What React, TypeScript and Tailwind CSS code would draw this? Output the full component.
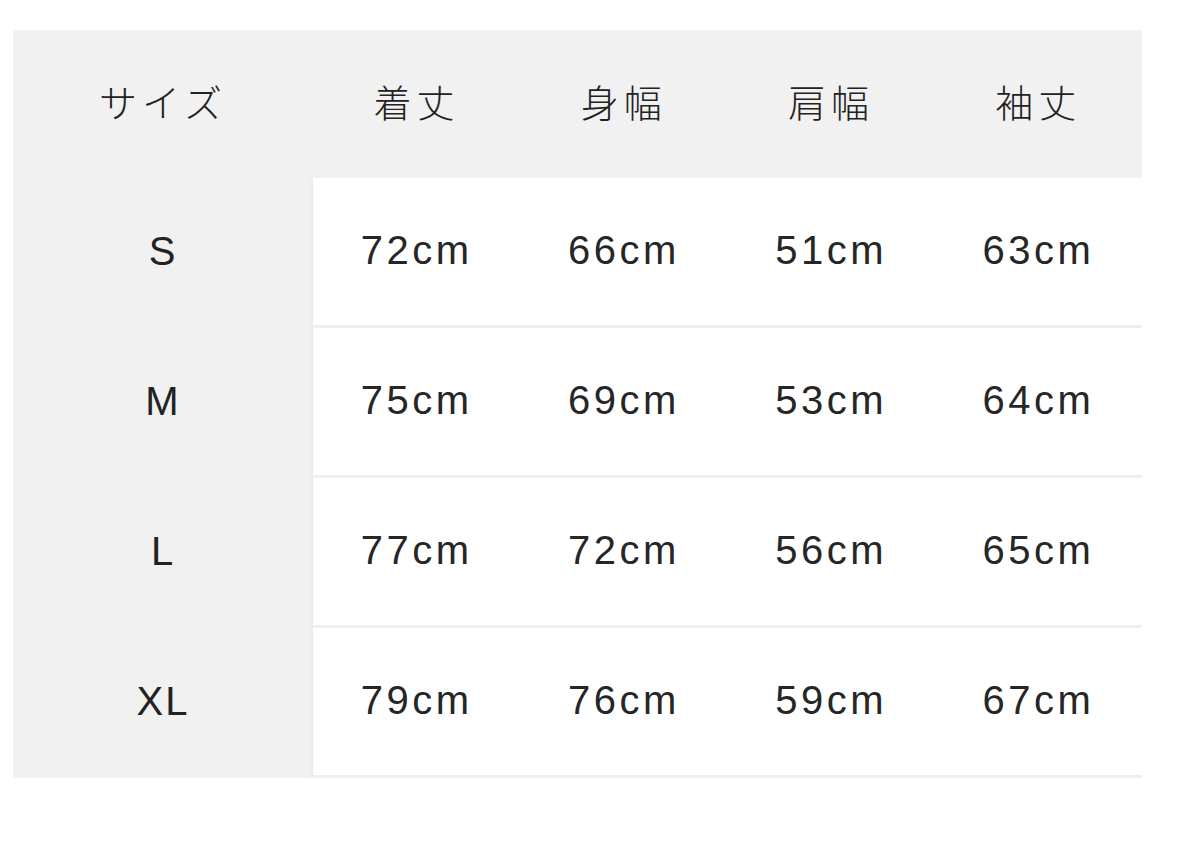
import React from 'react';

const headers = ['着丈', '身幅', '肩幅', '袖丈'];

const rows: { size: string; values: string[] }[] = [
  { size: 'S', values: ['72cm', '66cm', '51cm', '63cm'] },
  { size: 'M', values: ['75cm', '69cm', '53cm', '64cm'] },
  { size: 'L', values: ['77cm', '72cm', '56cm', '65cm'] },
  { size: 'XL', values: ['79cm', '76cm', '59cm', '67cm'] },
];

const headCell =
  "h-[148px] bg-[#f1f1f1] flex items-center justify-center pb-[8px] text-[38px] font-light tracking-[5px] font-['Noto_Sans_CJK_JP','Noto_Sans',sans-serif]";

export default function App() {
  return (
    <div className="w-[1200px] h-[843px] bg-white pt-[30px] pl-[13px]">
      <div className="w-[1129px] grid grid-cols-[300px_repeat(4,1fr)] text-[#222222]">
        {/* header */}
        <div className={headCell}>サイズ</div>
        {headers.map((h) => (
          <div key={h} className={headCell}>
            {h}
          </div>
        ))}

        {/* sizes */}
        {rows.map((r) => (
          <React.Fragment key={r.size}>
            <div className="h-[150px] bg-[#f1f1f1] flex items-center justify-center pb-[4px] text-[40px] tracking-[2px] font-['Liberation_Sans',Arial,sans-serif] shadow-[inset_-6px_0_6px_-6px_rgba(0,0,0,0.06)]">
              {r.size}
            </div>
            {r.values.map((v, i) => (
              <div
                key={i}
                className="h-[150px] bg-white border-b-[3px] border-[#efefef] flex items-center justify-center pb-[4px] text-[40px] tracking-[3.5px] text-[#262626] font-['Liberation_Sans',Arial,sans-serif]"
              >
                {v}
              </div>
            ))}
          </React.Fragment>
        ))}
      </div>
    </div>
  );
}
